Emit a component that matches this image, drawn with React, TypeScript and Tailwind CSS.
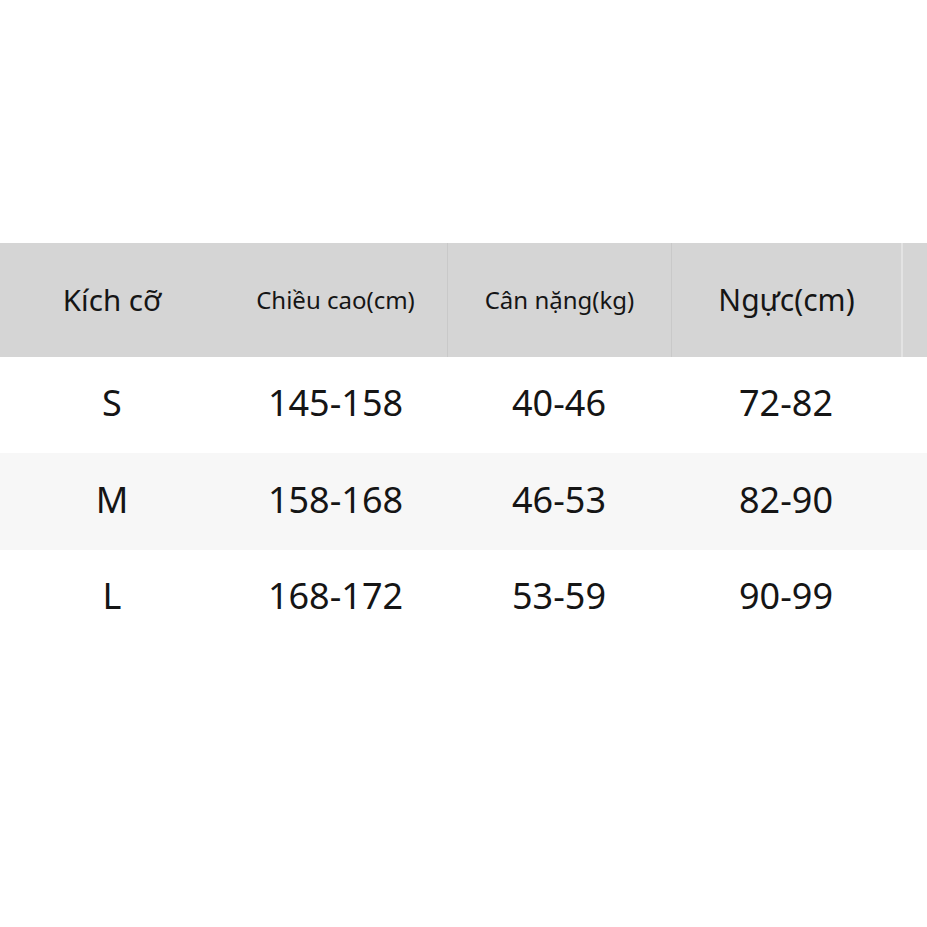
import React from "react";

const rows = [
  { s: "S", h: "145-158", w: "40-46", c: "72-82", bg: "bg-white", hh: "h-[96px]" },
  { s: "M", h: "158-168", w: "46-53", c: "82-90", bg: "bg-[#f7f7f7]", hh: "h-[97px]" },
  { s: "L", h: "168-172", w: "53-59", c: "90-99", bg: "bg-white", hh: "h-[96px]" },
];

const cols = "grid grid-cols-[224px_223px_224px_230px_1fr]";

export default function App() {
  return (
    <div
      className="w-[927px] h-[927px] bg-white text-[#151515] overflow-hidden"
      style={{ fontFamily: '"Noto Sans", "Open Sans", sans-serif' }}
    >
      <div className="h-[243px]" />
      <div className={`${cols} h-[114px] bg-[#d5d5d5]`}>
        <div className="flex items-center justify-center text-[29.5px] leading-none">Kích cỡ</div>
        <div className="flex items-center justify-center text-[24px] leading-none">Chiều cao(cm)</div>
        <div className="flex items-center justify-center text-[24px] leading-none border-l border-[#c9c9c9]">Cân nặng(kg)</div>
        <div className="flex items-center justify-center text-[30px] leading-none border-l border-[#c9c9c9]">Ngực(cm)</div>
        <div className="border-l-2 border-[#e3e3e3]" />
      </div>
      {rows.map((r) => (
        <div key={r.s} className={`${cols} ${r.hh} ${r.bg}`}>
          <div className="flex items-center justify-center text-[36px] leading-none pb-[4px]">{r.s}</div>
          <div className="flex items-center justify-center text-[36px] leading-none pb-[4px]">{r.h}</div>
          <div className="flex items-center justify-center text-[36px] leading-none pb-[4px]">{r.w}</div>
          <div className="flex items-center justify-center text-[36px] leading-none pb-[4px]">{r.c}</div>
          <div />
        </div>
      ))}
    </div>
  );
}
